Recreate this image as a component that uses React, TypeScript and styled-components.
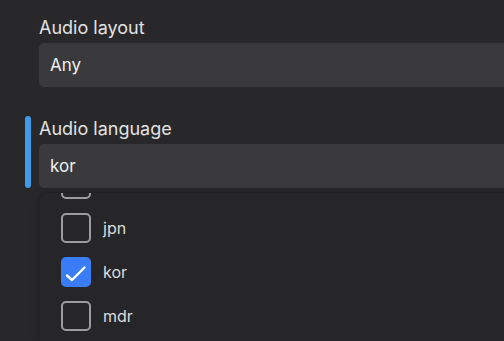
import React, { useLayoutEffect, useRef } from "react";
import styled, { createGlobalStyle } from "styled-components";

const GlobalStyle = createGlobalStyle`
  html, body {
    margin: 0;
    padding: 0;
    background: #28282a;
    overflow: hidden;
  }
  body {
    font-family: Inter, "Noto Sans", sans-serif;
    -webkit-font-smoothing: antialiased;
  }
`;

const Page = styled.div`
  display: flex;
  flex-direction: column;
  gap: 29px;
  width: 640px;
  height: 341px;
  padding: 15px 0 0 25px;
  box-sizing: border-box;
`;

const Row = styled.div`
  display: flex;
  gap: 8px;
`;

const Marker = styled.div<{ $active?: boolean }>`
  width: 6px;
  flex: none;
  border-radius: 3px;
  background: ${(p) => (p.$active ? "#3e9bea" : "transparent")};
`;

const Field = styled.div`
  flex: 1;
  display: flex;
  flex-direction: column;
  padding-top: 2px;
`;

const Label = styled.div`
  font-size: 18px;
  line-height: 22px;
  color: #e2e2e2;
  margin-bottom: 4px;
`;

const Input = styled.div`
  height: 44px;
  display: flex;
  align-items: center;
  padding: 0 11px;
  border-radius: 5px;
  background: #3a3a3c;
  color: #f0f0f0;
  font-size: 17px;
`;

const Menu = styled.div`
  margin: 3px 0 0 1px;
  height: 150px;
  background: #262628;
  border-radius: 7px 0 0 0;
  box-shadow: 0 0 8px rgba(0, 0, 0, 0.35);
  overflow: hidden;
`;

const List = styled.div`
  height: 100%;
  overflow: hidden;
  padding: 4px 0;
  box-sizing: border-box;
`;

const Option = styled.div`
  height: 44px;
  display: flex;
  align-items: center;
  gap: 12px;
  padding-left: 21px;
  color: #dcdcdc;
  font-size: 16px;
`;

const Box = styled.div<{ $checked?: boolean }>`
  width: 30px;
  height: 30px;
  box-sizing: border-box;
  border-radius: 5px;
  border: 2px solid ${(p) => (p.$checked ? "#3a7cf6" : "#9c9c9c")};
  background: ${(p) => (p.$checked ? "#3a7cf6" : "transparent")};
  display: flex;
  align-items: center;
  justify-content: center;
`;

const languages = ["ita", "jpn", "kor", "mdr", "por", "spa"];
const selected = ["kor"];

function Check() {
  return (
    <svg width="30" height="30" viewBox="0 0 30 30" style={{ margin: -2 }}>
      <path
        d="M6 18.5 L11 23 L23.5 10.5"
        fill="none"
        stroke="#fff"
        strokeWidth="2.4"
        strokeLinecap="round"
        strokeLinejoin="round"
      />
    </svg>
  );
}

export default function App() {
  const listRef = useRef<HTMLDivElement>(null);

  useLayoutEffect(() => {
    if (listRef.current) listRef.current.scrollTop = 35;
  }, []);

  return (
    <>
      <GlobalStyle />
      <Page>
        <Row>
          <Marker />
          <Field>
            <Label>Audio layout</Label>
            <Input>Any</Input>
          </Field>
        </Row>
        <div>
          <Row>
            <Marker $active />
            <Field>
              <Label>Audio language</Label>
              <Input>kor</Input>
            </Field>
          </Row>
          <Row>
            <Marker />
            <Field>
              <Menu>
                <List ref={listRef}>
                  {languages.map((lang) => {
                    const checked = selected.includes(lang);
                    return (
                      <Option key={lang}>
                        <Box $checked={checked}>{checked && <Check />}</Box>
                        {lang}
                      </Option>
                    );
                  })}
                </List>
              </Menu>
            </Field>
          </Row>
        </div>
      </Page>
    </>
  );
}
